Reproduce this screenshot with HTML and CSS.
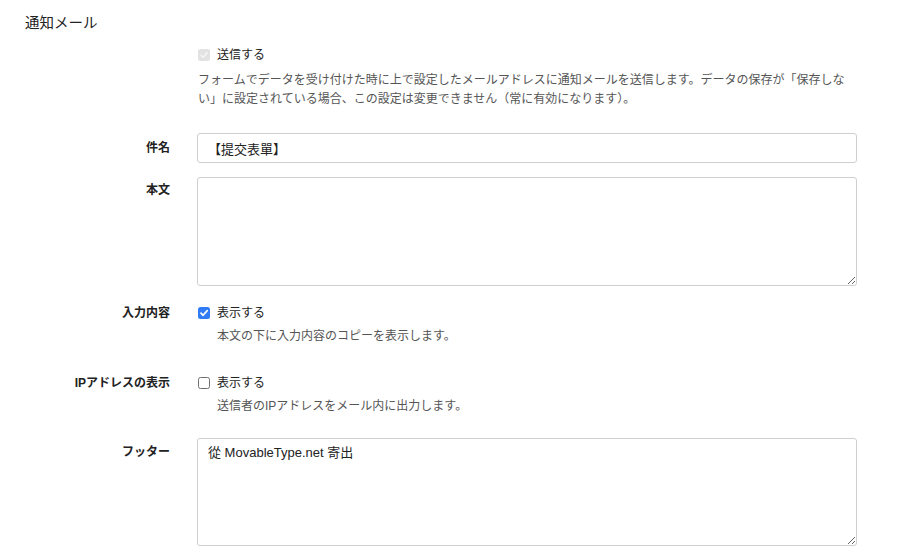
FILE: index.html
```html
<!DOCTYPE html>
<html lang="ja">
<head>
<meta charset="utf-8">
<link rel="stylesheet" href="styles.css">
</head>
<body>
<section class="panel">
  <h2 class="title">通知メール</h2>

  <div class="row row-send">
    <div class="label"></div>
    <div class="field">
      <label class="check-line">
        <span class="box box-disabled"><svg viewBox="0 0 12 12" width="12" height="12"><path d="M3 6.2 L5.1 8.3 L9.2 3.6" fill="none" stroke="#fff" stroke-width="1.6" stroke-linecap="round" stroke-linejoin="round"/></svg></span>
        <span class="check-text">送信する</span>
      </label>
      <p class="help help-flush">フォームでデータを受け付けた時に上で設定したメールアドレスに通知メールを送信します。データの保存が「保存しない」に設定されている場合、この設定は変更できません（常に有効になります）。</p>
    </div>
  </div>

  <div class="row row-subject">
    <div class="label label-input">件名</div>
    <div class="field"><input class="text-input" type="text" value="【提交表單】"></div>
  </div>

  <div class="row row-body">
    <div class="label label-area">本文</div>
    <div class="field"><textarea class="text-area"></textarea></div>
  </div>

  <div class="row row-content">
    <div class="label label-check">入力内容</div>
    <div class="field">
      <label class="check-line">
        <span class="box box-checked"><svg viewBox="0 0 12 12" width="12" height="12"><path d="M3 6.2 L5.1 8.3 L9.2 3.6" fill="none" stroke="#fff" stroke-width="1.7" stroke-linecap="round" stroke-linejoin="round"/></svg></span>
        <span class="check-text">表示する</span>
      </label>
      <p class="help help-indent">本文の下に入力内容のコピーを表示します。</p>
    </div>
  </div>

  <div class="row row-ip">
    <div class="label label-check">IPアドレスの表示</div>
    <div class="field">
      <label class="check-line">
        <span class="box box-empty"></span>
        <span class="check-text">表示する</span>
      </label>
      <p class="help help-indent">送信者のIPアドレスをメール内に出力します。</p>
    </div>
  </div>

  <div class="row row-footer">
    <div class="label label-area2">フッター</div>
    <div class="field"><textarea class="text-area text-area-footer">從 MovableType.net 寄出</textarea></div>
  </div>
</section>
</body>
</html>
```

FILE: styles.css
```css
html, body {
  margin: 0;
  padding: 0;
  background: #ffffff;
}
body {
  font-family: "Liberation Sans", "Noto Sans CJK JP", sans-serif;
  color: #333333;
  width: 900px;
  height: 554px;
  overflow: hidden;
}
.panel {
  display: flex;
  flex-direction: column;
}
.title {
  margin: 12px 0 0 25px;
  font-size: 14.5px;
  line-height: 22px;
  font-weight: normal;
  color: #222;
}
.row {
  display: flex;
  gap: 27px;
}
.label {
  width: 170px;
  flex: none;
  text-align: right;
  font-size: 12px;
  font-weight: bold;
  line-height: 18px;
  color: #222;
}
.field {
  width: 660px;
  flex: none;
  display: flex;
  flex-direction: column;
}
.row-send { margin-top: 11px; }
.row-subject { margin-top: 24px; }
.row-body { margin-top: 14px; }
.row-content { margin-top: 17px; }
.row-ip { margin-top: 27px; }
.row-footer { margin-top: 22px; }

.label-input { padding-top: 6px; }
.label-area { padding-top: 4px; }
.label-check { padding-top: 1px; }
.label-area2 { padding-top: 5px; }

.check-line {
  display: flex;
  align-items: center;
  height: 20px;
  padding-left: 1px;
  gap: 7px;
}
.box {
  width: 12px;
  height: 12px;
  box-sizing: border-box;
  border-radius: 2.5px;
  display: flex;
  flex: none;
}
.box-disabled { background: #e2e2e2; }
.box-disabled svg path { stroke: #f4f4f4; }
.box-checked { background: #2f7cf6; }
.box-empty { border: 1px solid #6f6f6f; background: #fff; }
.check-text {
  font-size: 12px;
  line-height: 20px;
  color: #222;
}
.help {
  margin: 0;
  font-size: 12px;
  line-height: 19px;
  color: #555;
}
.help-flush { margin-top: 6px; padding-left: 1px; }
.help-indent { margin-top: 4px; padding-left: 20px; }

.text-input, .text-area {
  box-sizing: border-box;
  width: 660px;
  border: 1px solid #cfcfcf;
  border-radius: 3px;
  font-family: "Liberation Sans", "Noto Sans CJK JP", sans-serif;
  font-size: 13px;
  color: #222;
  outline: none;
  background: #fff;
  margin: 0;
}
.text-input {
  height: 30px;
  padding: 0 10px;
}
.text-area {
  height: 109px;
  padding: 5px 10px;
  line-height: 18px;
  resize: vertical;
  display: block;
}
.text-area-footer { height: 108px; }
```
